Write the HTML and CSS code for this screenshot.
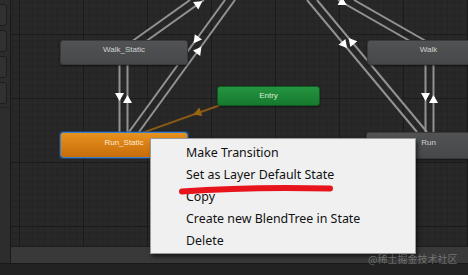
FILE: index.html
```html
<!DOCTYPE html>
<html>
<head>
<meta charset="utf-8">
<link rel="stylesheet" href="styles.css">
</head>
<body>
<div class="app">
  <div class="main">
    <aside class="sidebar">
      <div class="tab"></div>
      <div class="tab"></div>
      <div class="tab"></div>
      <div class="tab"></div>
      <div class="sidebar-rest"></div>
    </aside>
    <div class="graph">
      <div class="canvas">
        <svg class="edges" width="457" height="247" viewBox="11 0 457 247">
          <g stroke="#929292" stroke-width="2" fill="none">
            <line x1="119.5" y1="52" x2="119.5" y2="145"/>
            <line x1="127.5" y1="52" x2="127.5" y2="145"/>
            <line x1="425.5" y1="52" x2="425.5" y2="145"/>
            <line x1="433.5" y1="52" x2="433.5" y2="145"/>
            <line x1="117" y1="52" x2="190" y2="0"/>
            <line x1="131" y1="52" x2="204" y2="0"/>
            <line x1="129" y1="132" x2="225" y2="0"/>
            <line x1="139" y1="132" x2="235" y2="0"/>
            <line x1="307" y1="0" x2="417" y2="132"/>
            <line x1="317" y1="0" x2="427" y2="132"/>
            <line x1="338" y1="0" x2="429" y2="52"/>
            <line x1="354" y1="0" x2="445" y2="52"/>
          </g>
          <line x1="240" y1="98" x2="124" y2="139.4" stroke="#8a5a14" stroke-width="2"/>
          <g fill="#ffffff">
            <polygon points="119.5,101 115,93 124,93"/>
            <polygon points="127.5,95 123,103 132,103"/>
            <polygon points="425.5,101 421,93 430,93"/>
            <polygon points="433.5,95 429,103 438,103"/>
            <polygon points="202.3,1.2 198.3,9.5 193.1,2.1"/>
            <polygon points="193.6,43.2 202,39.5 194.8,34.2"/>
            <polygon points="201.4,46.8 200.2,55.9 193,50.6"/>
            <polygon points="347.1,48.1 338.5,44.8 345.4,39"/>
            <polygon points="348.6,37.9 350.3,47 357.3,41.2"/>
            <polygon points="346.7,5 337.6,4.9 342,-2.9"/>
          </g>
          <polygon points="193.2,114.4 199.3,107.4 202.3,115.9" fill="#9a6512"/>
        </svg>
        <div class="node gray n-walk-static">Walk_Static</div>
        <div class="node gray n-walk">Walk</div>
        <div class="node entry n-entry">Entry</div>
        <div class="node orange n-run-static">Run_Static</div>
        <div class="node gray n-run">Run</div>
      </div>
      <div class="statusbar"></div>
    </div>
  </div>
  <div class="footer"></div>

  <div class="menu">
    <div class="item">Make Transition</div>
    <div class="item">Set as Layer Default State</div>
    <div class="item">Copy</div>
    <div class="item">Create new BlendTree in State</div>
    <div class="item">Delete</div>
  </div>
  <svg class="scribble" width="468" height="275" viewBox="0 0 468 275">
    <path d="M182 191.5 Q 250 186.5 330 188.5" stroke="#e8141c" stroke-width="6" stroke-linecap="round" fill="none"/>
  </svg>
  <div class="watermark">@稀土掘金技术社区</div>
</div>
</body>
</html>
```

FILE: styles.css
```css
html, body {
  margin: 0;
  padding: 0;
  background: #212121;
}

.app {
  position: relative;
  width: 468px;
  height: 275px;
  overflow: hidden;
  display: flex;
  flex-direction: column;
}

.main {
  display: flex;
  height: 263px;
}

.sidebar {
  width: 10px;
  border-right: 1px solid #191919;
  background: #2c2c2c;
  display: flex;
  flex-direction: column;
  gap: 4px;
  padding-top: 4px;
  overflow: hidden;
}

.tab {
  flex: none;
  width: 12px;
  height: 22px;
  margin-left: -5px;
  box-sizing: border-box;
  border: 1px solid #1c1c1c;
  border-radius: 3px;
  background: #313131;
}

.sidebar-rest {
  flex: 1;
  margin-top: -1px;
  border-top: 1px solid #222;
  background: #2d2d2d;
}

.graph {
  flex: 1;
  display: flex;
  flex-direction: column;
}

.canvas {
  position: relative;
  height: 246px;
  overflow: hidden;
  background-color: #282828;
  background-image:
    linear-gradient(to right, #1b1b1b 1px, transparent 1px),
    linear-gradient(to bottom, #1b1b1b 1px, transparent 1px),
    linear-gradient(to right, rgba(0, 0, 0, 0.1) 1px, transparent 1px),
    linear-gradient(to bottom, rgba(0, 0, 0, 0.1) 1px, transparent 1px);
  background-size: 64px 64px, 64px 64px, 6.4px 6.4px, 6.4px 6.4px;
  background-position: 8px 0, 0 34px, 8px 0, 0 34px;
}

.edges {
  position: absolute;
  left: 0;
  top: 0;
}

.statusbar {
  height: 16px;
  border-top: 1px solid #1e1e1e;
  background: #393939;
}

.footer {
  flex: 1;
  border-top: 1px solid #191919;
  background: #222222;
}

/* graph nodes on the free canvas */
.node {
  position: absolute;
  box-sizing: border-box;
  border-radius: 3px;
  font-family: "Liberation Sans", Arial, sans-serif;
  font-size: 8px;
  line-height: 10px;
  padding-top: 4px;
  text-align: center;
  white-space: nowrap;
}

.gray {
  background: linear-gradient(#515254, #47484a);
  border: 1px solid #3a3a3a;
  color: #d2d2d2;
  box-shadow: 0 1px 2px rgba(0, 0, 0, 0.5);
}

.entry {
  background: linear-gradient(#259540, #167a2e);
  border: 1px solid #0e5a20;
  color: #d6efd6;
  padding-top: 4px;
  box-shadow: 0 1px 2px rgba(0, 0, 0, 0.5);
}

.orange {
  background: linear-gradient(#e8921f, #c76c0a);
  border: 1px solid #3c7fcc;
  color: #fde9d2;
  box-shadow: 0 0 0 1px rgba(40, 90, 160, 0.5);
}

.n-walk-static { left: 49px; top: 40px; width: 128px; height: 25px; }
.n-walk { left: 356px; top: 40px; width: 128px; height: 25px; padding-right: 5px; }
.n-entry { left: 206px; top: 86px; width: 103px; height: 20px; }
.n-run-static { left: 49px; top: 132px; width: 128px; height: 26px; padding-top: 5px; }
.n-run { left: 355px; top: 132px; width: 128px; height: 27px; padding-top: 5px; padding-right: 3px; }

/* context menu overlay */
.menu {
  position: absolute;
  left: 150px;
  top: 138px;
  width: 266px;
  height: 116px;
  box-sizing: border-box;
  padding: 3px 0 1px 0;
  background: #f0f0f0;
  border: 1px solid #9a9a9a;
  box-shadow: 2px 3px 4px rgba(0, 0, 0, 0.55);
  font-family: "Noto Sans", "Open Sans", sans-serif;
  font-size: 12.4px;
  color: #111111;
}

.item {
  height: 22px;
  line-height: 22px;
  padding-left: 35px;
  white-space: nowrap;
}

.scribble {
  position: absolute;
  left: 0;
  top: 0;
  pointer-events: none;
}

.watermark {
  position: absolute;
  left: 368px;
  top: 252px;
  font-family: "Noto Sans CJK SC", "Noto Sans", sans-serif;
  font-size: 10px;
  line-height: 14px;
  color: rgba(190, 190, 190, 0.45);
  white-space: nowrap;
}
```
